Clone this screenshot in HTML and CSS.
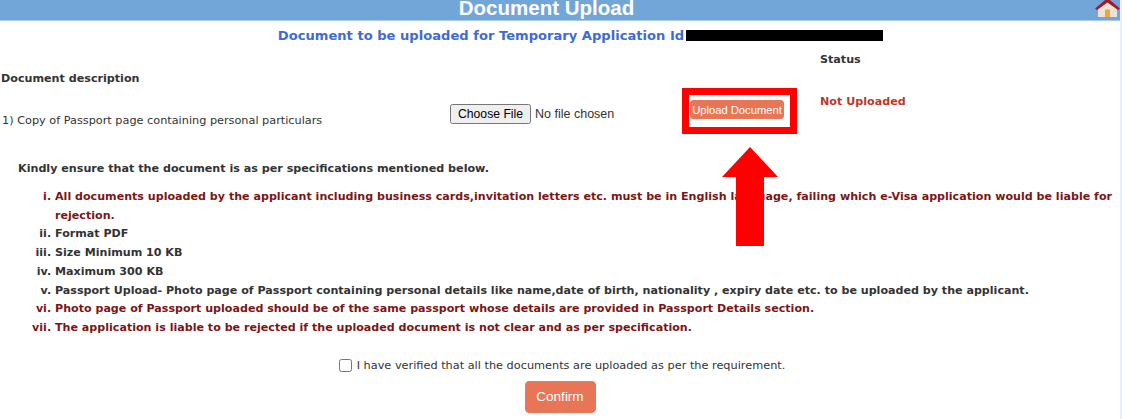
FILE: index.html
```html
<!DOCTYPE html>
<html lang="en">
<head>
<meta charset="utf-8">
<title>Document Upload</title>
<link rel="stylesheet" href="styles.css">
</head>
<body>
<div class="page">
  <header class="banner">
    <h1>Document Upload</h1>
    <svg class="home" viewBox="0 0 25 17" aria-hidden="true">
      <path d="M3 17V8L12.500 1 22 8v9z" fill="#e9e4d6"/>
      <path d="M10 17V9.500h5V17z" fill="#f0a63c"/>
      <path d="M0 8.500 12.500-2 25 8.500 23 10 12.500 2.500 2 10z" fill="#a5172b"/>
    </svg>
  </header>
  <h2 class="subtitle">Document to be uploaded for Temporary Application Id<span class="redact"></span></h2>
  <section class="docs">
    <div class="head-desc">Document description</div>
    <div class="head-status">Status</div>
    <div class="doc-name">1) Copy of Passport page containing personal particulars</div>
    <div class="doc-file"><input type="file" class="file"></div>
    <div class="doc-action"><button class="btn btn-small" type="button">Upload Document</button></div>
    <div class="doc-status">Not Uploaded</div>
  </section>
  <p class="notice">Kindly ensure that the document is as per specifications mentioned below.</p>
  <ol class="specs">
    <li class="warn">All documents uploaded by the applicant including business cards,invitation letters etc. must be in English language, failing which e-Visa application would be liable for rejection.</li>
    <li>Format PDF</li>
    <li>Size Minimum 10 KB</li>
    <li>Maximum 300 KB</li>
    <li>Passport Upload- Photo page of Passport containing personal details like name,date of birth, nationality , expiry date etc. to be uploaded by the applicant.</li>
    <li class="warn">Photo page of Passport uploaded should be of the same passport whose details are provided in Passport Details section.</li>
    <li class="warn">The application is liable to be rejected if the uploaded document is not clear and as per specification.</li>
  </ol>
  <label class="verify"><input type="checkbox"><span>I have verified that all the documents are uploaded as per the requirement.</span></label>
  <div class="confirm-row"><button class="btn btn-large" type="button">Confirm</button></div>
  <div class="mark-box"></div>
  <svg class="mark-arrow" viewBox="0 0 56 99" aria-hidden="true"><path d="M28 0 56 30H42V99H14V30H0z" fill="#ff0000"/></svg>
</div>
</body>
</html>
```

FILE: styles.css
```css
* { box-sizing: border-box; }
html, body { margin: 0; padding: 0; }
body {
  background: #fff;
  font-family: "DejaVu Sans", Verdana, sans-serif;
  font-size: 11.15px;
  color: #333;
  overflow: hidden;
}
.page { position: relative; width: 1122px; height: 419px; overflow: hidden; border-right: 2px solid #e4f0fa; }
.banner {
  position: relative;
  height: 21px;
  background: #73a6d8;
  border-bottom: 1px solid #a9cbea;
  text-align: center;
  padding-right: 27px;
  overflow: hidden;
}
.banner h1 {
  margin: 0;
  font: bold 20.500px/16px "Liberation Sans", Arial, sans-serif;
  color: #fff;
}
.home { position: absolute; right: 0; top: 0; width: 25px; height: 17px; }
.subtitle {
  margin: 7px 0 0;
  font-size: 13.100px;
  line-height: 16px;
  font-weight: bold;
  color: #3f6bd0;
  text-align: center;
}
.redact {
  display: inline-block;
  width: 197px;
  height: 11px;
  margin-left: 2px;
  margin-right: -41px;
  vertical-align: -1px;
  background: #000;
}
.docs {
  display: grid;
  grid-template-columns: 449px 240px 131px 1fr;
  grid-template-rows: 40px 47px;
  margin-top: 8px;
}
.head-desc { grid-column: 1; grid-row: 1; padding: 20px 0 0 1px; font-weight: bold; line-height: 14px; }
.head-status { grid-column: 4; grid-row: 1; padding-top: 1px; font-weight: bold; line-height: 14px; }
.doc-name { grid-column: 1; grid-row: 2; padding: 22px 0 0 2px; font-size: 11.270px; line-height: 14px; }
.doc-file { grid-column: 2; grid-row: 2; padding: 12px 0 0 1px; }
.doc-action { grid-column: 3; grid-row: 2; padding: 8px 0 0 1px; }
.doc-status { grid-column: 4; grid-row: 2; padding-top: 3px; font-weight: bold; color: #b93a2b; line-height: 14px; }
.file { font: 12.500px "Liberation Sans", Arial, sans-serif; width: 200px; color: #333; }
.file::file-selector-button { font: 12.200px "Liberation Sans", Arial, sans-serif; }
.btn {
  display: block;
  border: 1px solid #e8785a;
  background: #e87656;
  color: #fff;
  font-family: "Liberation Sans", Arial, sans-serif;
  border-radius: 3px;
  padding: 0;
  white-space: nowrap;
}
.btn-small { width: 94px; height: 19px; font-size: 11.200px; }
.btn-large { width: 71px; height: 32px; font-size: 13.500px; border-radius: 4px; margin: 0 auto; }
.notice { margin: 22px 0 0 18px; font-weight: bold; line-height: 16px; }
.specs {
  list-style: lower-roman;
  margin: 11px 2px 0 0;
  padding: 0 0 0 55px;
  font-size: 11.100px;
  font-weight: bold;
  line-height: 18.700px;
}
.warn { color: #7b1616; }
.verify {
  display: flex;
  align-items: center;
  justify-content: center;
  gap: 5px;
  margin-top: 20px;
  padding-left: 4px;
  font-size: 11.300px;
  line-height: 16px;
}
.verify input { margin: 0; width: 13px; height: 13px; }
.confirm-row { margin-top: 7px; }
.mark-box { position: absolute; left: 682px; top: 88px; width: 115px; height: 46px; border: 7px solid #ff0000; }
.mark-arrow { position: absolute; left: 722px; top: 147px; width: 56px; height: 99px; }
```
